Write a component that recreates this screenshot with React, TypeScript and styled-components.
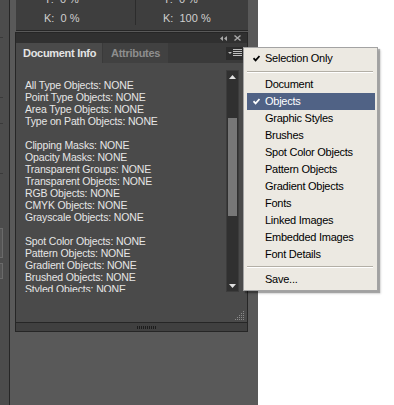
import React from 'react';
import styled, { createGlobalStyle } from 'styled-components';

const GlobalStyle = createGlobalStyle`
  html, body {
    margin: 0;
    padding: 0;
  }
  body {
    width: 394px;
    height: 405px;
    overflow: hidden;
    background: #ffffff;
    font-family: "Liberation Sans", Arial, sans-serif;
  }
`;

const Screen = styled.div`
  position: relative;
  width: 394px;
  height: 405px;
  display: flex;
  background: #ffffff;
  overflow: hidden;
`;

const AppArea = styled.div`
  width: 258px;
  height: 100%;
  display: flex;
  background: #595959;
`;

const SideStrip = styled.div`
  width: 9px;
  flex: none;
  background: #4c4c4c;
  border-right: 1px solid #262626;
  display: flex;
  flex-direction: column;
`;

const StripRule = styled.div<{ $top: number }>`
  width: 3px;
  height: 1px;
  margin-top: ${(p) => p.$top}px;
  background: #3a3a3a;
`;

const StripButton = styled.div<{ $top: number; $h: number }>`
  width: 2px;
  height: ${(p) => p.$h}px;
  margin-top: ${(p) => p.$top}px;
  border: 1px solid #6a6a6a;
  border-left: none;
  background: #555555;
`;

const Dock = styled.div`
  flex: 1;
  display: flex;
  flex-direction: column;
  padding-left: 5px;
  padding-right: 10px;
`;

const TopPanel = styled.div`
  height: 30px;
  margin-left: 1px;
  background: #3e3e3e;
  border-bottom: 1px solid #262626;
  display: grid;
  grid-template-columns: 119px 1fr;
  overflow: hidden;
`;

const ColorColumn = styled.div<{ $divider?: boolean }>`
  display: flex;
  flex-direction: column;
  margin-top: -10px;
  padding-left: ${(p) => (p.$divider ? 27 : 28)}px;
  border-left: ${(p) => (p.$divider ? '1px solid #2c2c2c' : 'none')};
  height: 35px;
`;

const ColorValue = styled.div`
  height: 19px;
  line-height: 19px;
  font-size: 11px;
  color: #cfcfcf;
  white-space: pre;
`;

const DocPanel = styled.div`
  margin-top: 1px;
  height: 298px;
  border: 1px solid #262626;
  display: flex;
  flex-direction: column;
  background: #4a4a4a;
`;

const HeaderBar = styled.div`
  height: 10px;
  background: #303030;
  display: flex;
  align-items: center;
  justify-content: flex-end;
  gap: 7px;
  padding-right: 6px;
`;

const TabBar = styled.div`
  height: 20px;
  background: #3a3a3a;
  display: flex;
  align-items: stretch;
`;

const Tab = styled.div<{ $active?: boolean }>`
  padding: 0 ${(p) => (p.$active ? '6px 0 7px' : '8px 0 8px')};
  margin-right: 1px;
  display: flex;
  align-items: center;
  font-size: 11px;
  font-weight: bold;
  letter-spacing: -0.3px;
  color: ${(p) => (p.$active ? '#e4e4e4' : '#8e8e8e')};
  background: ${(p) => (p.$active ? '#4a4a4a' : '#414141')};
`;

const TabFill = styled.div`
  flex: 1;
  display: flex;
  justify-content: flex-end;
  align-items: center;
  padding-right: 4px;
`;

const MenuButton = styled.div`
  width: 17px;
  height: 13px;
  background: #2c2c2c;
  display: flex;
  align-items: center;
  justify-content: center;
`;

const Body = styled.div`
  flex: 1;
  display: flex;
  flex-direction: column;
  padding-top: 7px;
`;

const ScrollRow = styled.div`
  height: 222px;
  display: flex;
  padding-right: 8px;
`;

const InfoList = styled.div`
  flex: 1;
  overflow: hidden;
  padding: 9px 0 0 9px;
  font-size: 10.5px;
  letter-spacing: -0.15px;
  color: #e6e6e6;
`;

const InfoLine = styled.div`
  height: 12px;
  line-height: 12px;
  white-space: pre;
`;

const Scrollbar = styled.div`
  width: 11px;
  background: #303030;
  border: 1px solid #3c3c3c;
  display: flex;
  flex-direction: column;
`;

const ScrollArrow = styled.div`
  height: 11px;
  display: flex;
  align-items: center;
  justify-content: center;
`;

const ScrollTrack = styled.div`
  flex: 1;
  display: flex;
  flex-direction: column;
  padding: 36px 1px 0;
`;

const ScrollThumb = styled.div`
  height: 98px;
  background: #777777;
`;

const GripArea = styled.div`
  flex: 1;
  display: flex;
  justify-content: flex-end;
  align-items: flex-end;
  padding: 0 2px 1px 0;
`;

const BottomBar = styled.div`
  height: 8px;
  border-top: 1px solid #262626;
  background: #404040;
  display: flex;
  align-items: center;
  justify-content: center;
  padding-left: 30px;
`;

const Menu = styled.div`
  position: absolute;
  left: 243px;
  top: 47px;
  width: 133px;
  padding: 2px 0;
  background: #ece9e2;
  border: 1px solid #a3a3a3;
  box-shadow: 2px 2px 1px rgba(0, 0, 0, 0.28), 3px 3px 2px rgba(0, 0, 0, 0.12);
  font-size: 11px;
  letter-spacing: -0.25px;
  color: #000000;
`;

const MenuItem = styled.div<{ $selected?: boolean }>`
  position: relative;
  height: 17px;
  line-height: 17px;
  margin: 0 2px 0 3px;
  padding-left: 18px;
  white-space: pre;
  background: ${(p) => (p.$selected ? '#506285' : 'transparent')};
  color: ${(p) => (p.$selected ? '#ffffff' : '#000000')};
`;

const Check = styled.svg`
  position: absolute;
  left: 6px;
  top: 5px;
`;

const MenuSeparator = styled.div<{ $h: number }>`
  height: ${(p) => p.$h}px;
  margin: 0 4px 0 3px;
  display: flex;
  align-items: center;
  &::after {
    content: '';
    flex: 1;
    height: 2px;
    border-top: 1px solid #b3afa6;
    border-bottom: 1px solid #ffffff;
    box-sizing: border-box;
  }
`;

const groups = [
  ['All Type Objects: NONE', 'Point Type Objects: NONE', 'Area Type Objects: NONE', 'Type on Path Objects: NONE'],
  [
    'Clipping Masks: NONE',
    'Opacity Masks: NONE',
    'Transparent Groups: NONE',
    'Transparent Objects: NONE',
    'RGB Objects: NONE',
    'CMYK Objects: NONE',
    'Grayscale Objects: NONE',
  ],
  ['Spot Color Objects: NONE', 'Pattern Objects: NONE', 'Gradient Objects: NONE', 'Brushed Objects: NONE', 'Styled Objects: NONE'],
];

const menuItems = [
  'Document',
  'Objects',
  'Graphic Styles',
  'Brushes',
  'Spot Color Objects',
  'Pattern Objects',
  'Gradient Objects',
  'Fonts',
  'Linked Images',
  'Embedded Images',
  'Font Details',
];

const CheckMark = ({ color }: { color: string }) => (
  <Check width="7" height="7" viewBox="0 0 7 7">
    <path d="M0.5 3.2 L2.6 5.4 L6.5 1" fill="none" stroke={color} strokeWidth="1.7" />
  </Check>
);

const GripDots = () => (
  <svg width="10" height="10" viewBox="0 0 10 10">
    {[
      [8, 0],
      [6, 2], [8, 2],
      [4, 4], [6, 4], [8, 4],
      [2, 6], [4, 6], [6, 6], [8, 6],
      [0, 8], [2, 8], [4, 8], [6, 8], [8, 8],
    ].map(([x, y]) => (
      <rect key={`${x}-${y}`} x={x} y={y} width="1" height="1" fill="#8a8a8a" />
    ))}
  </svg>
);

export default function App() {
  return (
    <Screen>
      <GlobalStyle />
      <AppArea>
        <SideStrip>
          <StripRule $top={37} />
          <StripRule $top={59} />
          <StripRule $top={25} />
          <StripRule $top={49} />
          <StripButton $top={54} $h={28} />
          <StripButton $top={5} $h={14} />
        </SideStrip>
        <Dock>
          <TopPanel>
            <ColorColumn>
              <ColorValue>Y:  0 %</ColorValue>
              <ColorValue>K:  0 %</ColorValue>
            </ColorColumn>
            <ColorColumn $divider>
              <ColorValue>Y:  0 %</ColorValue>
              <ColorValue>K:  100 %</ColorValue>
            </ColorColumn>
          </TopPanel>
          <DocPanel>
            <HeaderBar>
              <svg width="7" height="5" viewBox="0 0 7 5">
                <path d="M3 0 L0 2.5 L3 5 Z M7 0 L4 2.5 L7 5 Z" fill="#a8a8a8" />
              </svg>
              <svg width="7" height="6" viewBox="0 0 7 6">
                <path d="M0.5 0.5 L6.5 5.5 M6.5 0.5 L0.5 5.5" stroke="#a8a8a8" strokeWidth="1.4" />
              </svg>
            </HeaderBar>
            <TabBar>
              <Tab $active>Document Info</Tab>
              <Tab>Attributes</Tab>
              <TabFill>
                <MenuButton>
                  <svg width="14" height="8" viewBox="0 0 14 8">
                    <path d="M0 3 L4 3 L2 5 Z" fill="#bdbdbd" />
                    <path d="M5 0.5 H14 M5 2.5 H14 M5 4.5 H14 M5 6.5 H14" stroke="#bdbdbd" strokeWidth="1" />
                  </svg>
                </MenuButton>
              </TabFill>
            </TabBar>
            <Body>
              <ScrollRow>
                <InfoList>
                  {groups.map((g, gi) => (
                    <React.Fragment key={gi}>
                      {gi > 0 && <InfoLine> </InfoLine>}
                      {g.map((line) => (
                        <InfoLine key={line}>{line}</InfoLine>
                      ))}
                    </React.Fragment>
                  ))}
                </InfoList>
                <Scrollbar>
                  <ScrollArrow>
                    <svg width="7" height="4" viewBox="0 0 7 4">
                      <path d="M3.5 0 L7 4 L0 4 Z" fill="#e0e0e0" />
                    </svg>
                  </ScrollArrow>
                  <ScrollTrack>
                    <ScrollThumb />
                  </ScrollTrack>
                  <ScrollArrow>
                    <svg width="7" height="4" viewBox="0 0 7 4">
                      <path d="M0 0 L7 0 L3.5 4 Z" fill="#e0e0e0" />
                    </svg>
                  </ScrollArrow>
                </Scrollbar>
              </ScrollRow>
              <GripArea>
                <GripDots />
              </GripArea>
            </Body>
            <BottomBar>
              <svg width="20" height="3" viewBox="0 0 20 3">
                {Array.from({ length: 10 }).map((_, i) => (
                  <rect key={i} x={i * 2} y="0" width="1" height="3" fill="#1c1c1c" />
                ))}
              </svg>
            </BottomBar>
          </DocPanel>
        </Dock>
      </AppArea>
      <Menu>
        <MenuItem>
          <CheckMark color="#000000" />
          Selection Only
        </MenuItem>
        <MenuSeparator $h={9} />
        {menuItems.map((item) => (
          <MenuItem key={item} $selected={item === 'Objects'}>
            {item === 'Objects' && <CheckMark color="#ffffff" />}
            {item}
          </MenuItem>
        ))}
        <MenuSeparator $h={8} />
        <MenuItem>Save...</MenuItem>
      </Menu>
    </Screen>
  );
}
